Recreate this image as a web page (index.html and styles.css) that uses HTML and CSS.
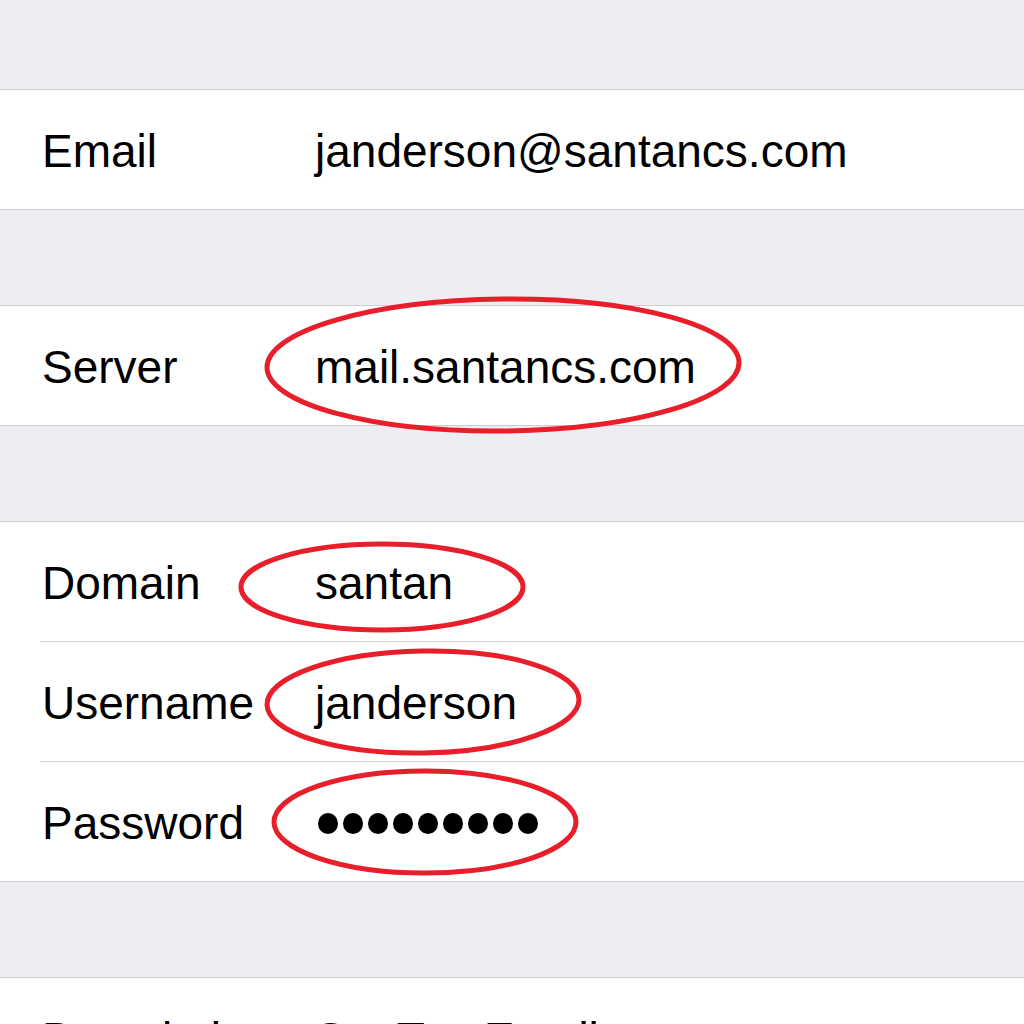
FILE: index.html
```html
<!DOCTYPE html>
<html lang="en">

<head>
    <meta charset="UTF-8">
    <meta name="viewport" content="width=device-width, initial-scale=1.0">
    <title>Exchange Account</title>
    <link rel="stylesheet" href="styles.css">
</head>

<body>
    <div class="page">
        <div class="spacer top"></div>

        <div class="group">
            <div class="row">
                <span class="label">Email</span>
                <span class="value">janderson@santancs.com</span>
            </div>
        </div>

        <div class="spacer"></div>

        <div class="group">
            <div class="row">
                <span class="label">Server</span>
                <span class="value">mail.santancs.com</span>
            </div>
        </div>

        <div class="spacer"></div>

        <div class="group">
            <div class="row">
                <span class="label">Domain</span>
                <span class="value">santan</span>
            </div>
            <div class="sep"></div>
            <div class="row">
                <span class="label">Username</span>
                <span class="value">janderson</span>
            </div>
            <div class="sep"></div>
            <div class="row">
                <span class="label">Password</span>
                <span class="value dots">
                    <i></i><i></i><i></i><i></i><i></i><i></i><i></i><i></i><i></i>
                </span>
            </div>
        </div>

        <div class="spacer"></div>

        <div class="group">
            <div class="row">
                <span class="label">Description</span>
                <span class="value">SanTan Email</span>
            </div>
        </div>

        <!-- red marker circles drawn over the screenshot -->
        <svg class="marks" width="1024" height="1024" viewBox="0 0 1024 1024">
            <ellipse cx="503" cy="365" rx="236" ry="66" transform="rotate(-0.6 503 365)" />
            <ellipse cx="382" cy="587" rx="141" ry="43" />
            <ellipse cx="423" cy="702" rx="156" ry="51" transform="rotate(-1 423 702)" />
            <ellipse cx="425" cy="822" rx="151" ry="51" />
        </svg>
    </div>
</body>

</html>
```

FILE: styles.css
```css
body {
    margin: 0;
    background-color: #efedf4;
    font-family: 'Liberation Sans', Arial, sans-serif;
    color: #000000;
    overflow: hidden;
}

.page {
    position: relative;
    height: 1024px;
    overflow: hidden;
}

.spacer {
    height: 95px;
}

.spacer.top {
    height: 89px;
}

.group {
    background-color: #ffffff;
    border-top: 1px solid #cfcdd3;
    border-bottom: 1px solid #cfcdd3;
}

.row {
    height: 119px;
    display: flex;
    align-items: center;
    padding-left: 42px;
    padding-top: 3px;
    box-sizing: border-box;
    font-size: 46px;
}

.label {
    width: 273px;
    flex-shrink: 0;
}

.value {
    white-space: nowrap;
}

.sep {
    height: 1px;
    margin-left: 40px;
    background-color: #d3d1d6;
}

.dots {
    display: flex;
    gap: 5px;
    padding-left: 3px;
}

.dots i {
    width: 20px;
    height: 21px;
    border-radius: 50%;
    background-color: #000000;
}

.marks {
    position: absolute;
    top: 0;
    left: 0;
    pointer-events: none;
}

.marks ellipse {
    fill: none;
    stroke: #e81e2a;
    stroke-width: 5;
}
```
